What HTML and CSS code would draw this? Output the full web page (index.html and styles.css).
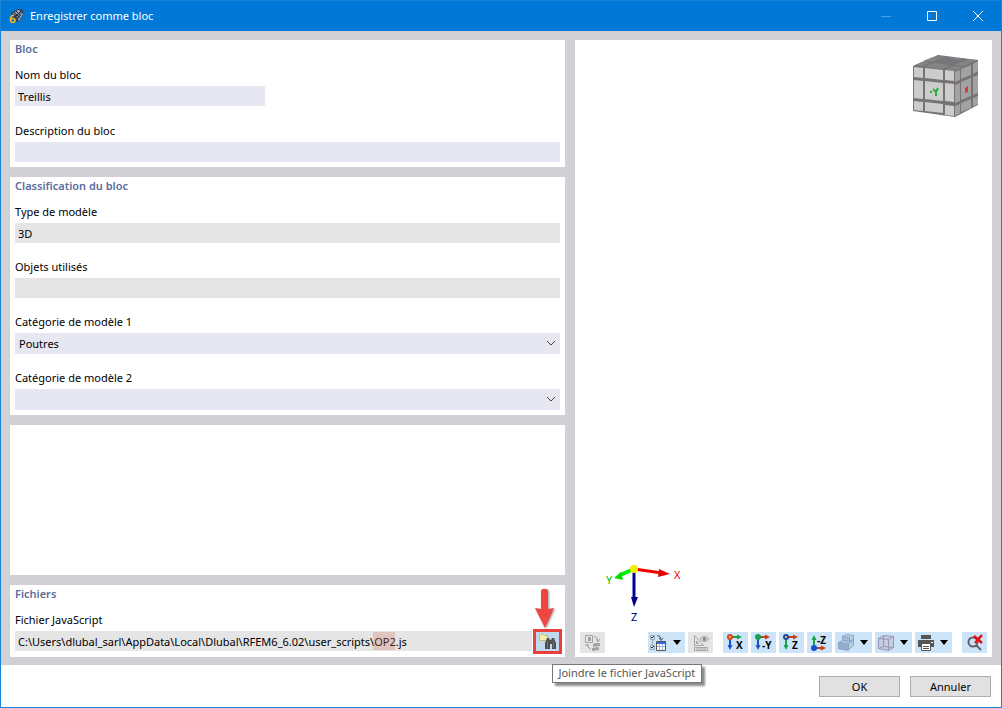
FILE: index.html
```html
<!DOCTYPE html>
<html lang="fr">
  <head>
    <meta charset="UTF-8" />
    <meta name="viewport" content="width=device-width, initial-scale=1.0" />
    <title>Enregistrer comme bloc</title>
    <link rel="stylesheet" href="styles.css">
  </head>
  <body>
    <div class="window">
      <header class="titlebar">
        <svg class="app-icon" width="16" height="16" viewBox="0 0 16 16">
          <path d="M2 5 8 1l5 0 2 4-4 8-4 1-5-5z" fill="#33455a" />
          <path d="M4 5l5-3 3 1-5 4zM9 11l4-6 1 1-4 7z" fill="#9fb0c2" />
          <path d="M7 8l5-4 1 1-4 5z" fill="#6d8197" />
          <path d="M5 4l6 6M7 3l5 5M6 9l6-6" stroke="#1b2a3c" fill="none" />
          <path d="M5 7.500C2.500 7 1.500 9 1.500 11.500s1 3 2.200 3S6 13.500 6 12.500s-1-2-2.300-2S1.500 11 1.500 12" fill="none" stroke="#f0bb28" stroke-width="1.600" />
        </svg>
        <h1>Enregistrer comme bloc</h1>
        <div class="window-controls">
          <button class="dim" aria-label="Réduire">
            <svg width="10" height="10"><path d="M0 5.500h10" /></svg>
          </button>
          <button aria-label="Agrandir">
            <svg width="10" height="10"><path d="M.5.500h9v9h-9z" /></svg>
          </button>
          <button aria-label="Fermer">
            <svg width="10" height="10"><path d="M0 0l10 10M10 0L0 10" /></svg>
          </button>
        </div>
      </header>

      <main class="content">
        <form class="form-column">
          <section class="panel panel-block">
            <h2>Bloc</h2>
            <div class="field">
              <label for="name">Nom du bloc</label>
              <input class="short" id="name" type="text" value="Treillis" />
            </div>
            <div class="field">
              <label for="description">Description du bloc</label>
              <input id="description" type="text" />
            </div>
          </section>

          <section class="panel">
            <h2>Classification du bloc</h2>
            <div class="field">
              <label for="type">Type de modèle</label>
              <input id="type" type="text" value="3D" readonly />
            </div>
            <div class="field">
              <label for="objects">Objets utilisés</label>
              <input id="objects" type="text" readonly />
            </div>
            <div class="field">
              <label for="category1">Catégorie de modèle 1</label>
              <div class="select">
                <select id="category1"><option>Poutres</option></select>
                <svg width="10" height="6"><path d="M1 1l4 4 4-4" /></svg>
              </div>
            </div>
            <div class="field">
              <label for="category2">Catégorie de modèle 2</label>
              <div class="select">
                <select id="category2"><option></option></select>
                <svg width="10" height="6"><path d="M1 1l4 4 4-4" /></svg>
              </div>
            </div>
          </section>

          <section class="panel"></section>

          <section class="panel">
            <h2>Fichiers</h2>
            <div class="field">
              <label for="script">Fichier JavaScript</label>
              <div class="file-row">
                <div class="file-path">
                  <input id="script" type="text" value="C:\Users\dlubal_sarl\AppData\Local\Dlubal\RFEM6_6.02\user_scripts\OP2.js" readonly />
                  <span class="highlight"></span>
                </div>
                <div class="browse">
                  <button class="tool" type="button" aria-label="Joindre le fichier JavaScript">
                    <svg width="19" height="17" viewBox="0 0 19 17">
                      <path d="M1.500 2.500l1-1h3l1 1h3v5h-8z" fill="#f6efaa" stroke="#cdbf62" />
                      <path d="M9 5h2l1 2h1l1-2h2l2 5v6h-4v-5h-2v5H7v-6z" fill="#505050" />
                      <path d="M9.500 8v7M15.500 8v7" stroke="#707070" />
                    </svg>
                  </button>
                  <svg class="arrow" width="22" height="42" viewBox="0 0 22 42">
                    <path d="M7 3q0-2 2-2h3q2 0 2 2v18l6-1-9 20L1 20l6 1z" fill="#ee4640" />
                  </svg>
                  <div class="tooltip" role="tooltip">Joindre le fichier JavaScript</div>
                </div>
              </div>
            </div>
          </section>
        </form>

        <section class="preview">
          <div class="viewport">
            <svg class="cube" width="68" height="64" viewBox="0 0 68 64">
              <path d="M1 12L26 1l40 5v45L43 63 1 57z" fill="#777373" />
              <path d="M3 11l7-3 8 1-7 3zM11 7l10-4 8 1-9 4zM23 3l4-1 8 1-5 1zM13 13l8-4 18 2-8 4zM22 8l9-4 16 2-8 4zM33 3l4 0 15 2-4 1zM34 15l8-3 9 1-8 4zM43 11l7-4 9 1-6 4zM52 7l4-2 8 1-4 2z" fill="#858585" />
              <path d="M22 8l9-4 16 2-8 4z" fill="#73777d" />
              <path d="M2 13l9 1v10l-9-1zM13 14l18 2v10l-18-2zM33 16l9 1v10l-9-1zM2 26l9 1v18l-9-1zM13 27l18 2v18l-18-2zM33 29l9 1v18l-9-1zM2 47l9 1v9l-9-1zM13 48l18 2v9l-18-2zM33 51l9 1v10l-9-1z" fill="#cccccc" />
              <path d="M43 18l5-2v10l-5 2zM49 15l10-4v10l-10 4zM61 10l5-3v10l-5 3zM43 31l5-2v18l-5 2zM49 28l10-4v18l-10 4zM61 23l5-2v18l-5 2zM43 52l5-2v9l-5 3zM49 49l10-4v9l-10 4zM61 44l5-2v8l-5 3z" fill="#a2a2a2" />
              <path d="M18 38h2M21 35l3 3 2-4M24 37v5" stroke="#2bac3c" stroke-width="2" fill="none" />
              <path d="M53 34l3-2v6l-3 1z" fill="#dc3a36" />
            </svg>
            <svg class="axes" width="86" height="66" viewBox="0 0 86 66">
              <path d="M34 9l28 4" stroke="#f20000" stroke-width="3" />
              <path d="M59 9l11 5-12 3z" fill="#e50000" />
              <path d="M34 9l-14 6" stroke="#00f000" stroke-width="4" />
              <path d="M21 12l-7 6 9 2z" fill="#00e000" />
              <path d="M34 9v30" stroke="#000096" stroke-width="3" />
              <path d="M31 37h7l-4 10z" fill="#000080" />
              <circle cx="34" cy="9" r="4" fill="#f2ee00" />
              <text x="74" y="19" fill="#f20000">X</text>
              <text x="6" y="24" fill="#00c000">Y</text>
              <text x="31" y="61" fill="#000080">Z</text>
            </svg>
          </div>

          <div class="toolbar">
            <button class="tool first" disabled aria-label="Image">
              <svg width="18" height="18" viewBox="0 0 18 18" fill="none" stroke="#a2a2a2">
                <path d="M1.500 1.500h7v7h-7z" />
                <path d="M4 3h3v4H4z" fill="#a2a2a2" stroke="none" />
                <path d="M10 2.500q4 0 4 5M12 5l2 3 2-3M3 10q0 4 4 5M1 12l2-2 2 2" />
                <path d="M9 10l2-1h5v3l-7 1zM8 14l7-1v3l-7 1z" fill="#a2a2a2" stroke="none" />
              </svg>
            </button>
            <button class="tool menu" aria-label="Options d'affichage">
              <svg width="18" height="18" viewBox="0 0 18 18" fill="none">
                <path d="M.5 1.500h4v4h-4zM.5 11.500h4v4h-4zM2.500 6v5" stroke="#9aa7b3" />
                <path d="M1 3l1 1 2-2M1 13l1 1 2-2" stroke="#333" />
                <path d="M7 1.500q4 0 4 4M9 4l2 2.500L13 4" stroke="#555" />
                <path d="M6.500 7.500h9v9h-9z" fill="#fff" stroke="#555" />
                <path d="M7 8h8v2H7z" fill="#3769ed" />
                <path d="M7 12.500h8M9.500 10v6M12.500 10v6" stroke="#9db1c8" />
              </svg>
              <span class="caret"></span>
            </button>
            <button class="tool" disabled aria-label="Mesures">
              <svg width="18" height="18" viewBox="0 0 18 18" fill="none" stroke="#a5a5a5">
                <path d="M2.500 1.500v10h9zM4.500 7v2.500h2z" />
                <path d="M2.500 13.500h13v3h-13zM5 14v2M7 14v2M9 14v2M11 14v2M13 14v2" />
                <path d="M8 5q4-5 9 0-5 5-9 0z" />
                <circle cx="12.500" cy="5" r="1.500" fill="#8d8d8d" stroke="#8d8d8d" />
              </svg>
            </button>

            <button class="tool group" aria-label="Vue X">
              <svg class="view-icon" width="19" height="18" viewBox="0 0 19 18">
                <path d="M4 3h8" stroke="#16a34a" />
                <path d="M11 0.500l5 2.500-5 2.500z" fill="#16a34a" />
                <path d="M4 3v9" stroke="#1650cf" />
                <path d="M1.500 11h5L4 16z" fill="#1650cf" />
                <circle cx="4" cy="3" r="2" fill="#ffe34d" stroke="#d8431a" />
                <text x="10" y="15">X</text>
              </svg>
            </button>
            <button class="tool" aria-label="Vue -Y">
              <svg class="view-icon" width="19" height="18" viewBox="0 0 19 18">
                <path d="M4 3h8" stroke="#cf3b15" />
                <path d="M11 0.500l5 2.500-5 2.500z" fill="#cf3b15" />
                <path d="M4 3v9" stroke="#1650cf" />
                <path d="M1.500 11h5L4 16z" fill="#1650cf" />
                <circle cx="4" cy="3" r="2" fill="#16a34a" stroke="#16a34a" />
                <text x="8" y="15">-Y</text>
              </svg>
            </button>
            <button class="tool" aria-label="Vue Z">
              <svg class="view-icon" width="19" height="18" viewBox="0 0 19 18">
                <path d="M4 3h8" stroke="#cf3b15" />
                <path d="M11 0.500l5 2.500-5 2.500z" fill="#cf3b15" />
                <path d="M4 3v9" stroke="#16a34a" />
                <path d="M1.500 11h5L4 16z" fill="#16a34a" />
                <circle cx="4" cy="3" r="2" fill="#ffe34d" stroke="#254799" />
                <text x="10" y="15">Z</text>
              </svg>
            </button>
            <button class="tool" aria-label="Vue -Z">
              <svg class="view-icon" width="19" height="18" viewBox="0 0 19 18">
                <path d="M4 14h8" stroke="#cf3b15" />
                <path d="M11 11.500l5 2.500-5 2.500z" fill="#cf3b15" />
                <path d="M4 14V6" stroke="#16a34a" />
                <path d="M1.500 6h5L4 1z" fill="#16a34a" />
                <circle cx="4" cy="14" r="2" fill="#1650cf" stroke="#1650cf" />
                <text x="7" y="10">-Z</text>
              </svg>
            </button>
            <button class="tool menu" aria-label="Affichage du modèle">
              <svg width="18" height="18" viewBox="0 0 18 18" stroke="#8ba6c4">
                <path d="M5.500 2.500l4-2 7 1v4l-4 2-7-1z" fill="#b9cee4" />
                <path d="M5.500 2.500l7 1v4l-7-1z" fill="#a3bbd6" />
                <path d="M1.500 8.500l4-2 7 1 4-2v6l-5 4-10-1z" fill="#b9cee4" />
                <path d="M1.500 8.500l10 1v7l-10-2z" fill="#94afcd" />
                <path d="M11.500 9.500l5-3" />
              </svg>
              <span class="caret"></span>
            </button>
            <button class="tool menu" aria-label="Affichage filaire">
              <svg width="18" height="18" viewBox="0 0 18 18" fill="#c5cde3" stroke="#9a94b2">
                <path d="M1.500 4.500l5-3 10 1v11l-5 3-10-2z" />
                <path d="M1.500 4.500l10 1v11M11.500 5.500l5-3M6.500 1.500v11l10 1M6.500 12.500l-5 2" fill="none" />
              </svg>
              <span class="caret"></span>
            </button>
            <button class="tool menu" aria-label="Imprimer">
              <svg width="18" height="18" viewBox="0 0 18 18" fill="#555">
                <path d="M4 1h10v4H4zM1 6h16v7H1z" />
                <path d="M4.500 9.500h9v7h-9z" fill="#fff" stroke="#555" />
                <path d="M6 12.500h6M6 14.500h6" stroke="#555" />
                <path d="M14 8h2v1h-2z" fill="#fff" />
              </svg>
              <span class="caret"></span>
            </button>
            <button class="tool group" aria-label="Réinitialiser le zoom">
              <svg width="18" height="18" viewBox="0 0 18 18" fill="none">
                <circle cx="7" cy="8" r="4.500" stroke="#5c6268" stroke-width="2" />
                <path d="M10 11l5 5" stroke="#5c6268" stroke-width="2" />
                <path d="M8 2l8 7M16 1L9 9" stroke="#e80c17" stroke-width="2.500" />
              </svg>
            </button>
          </div>
        </section>
      </main>

      <footer class="footer">
        <button>OK</button>
        <button>Annuler</button>
      </footer>
    </div>
  </body>
</html>
```

FILE: styles.css
```css
* {
  margin: 0;
  padding: 0;
  box-sizing: border-box;
}

body,
button,
input,
select {
  font-family: "Noto Sans", "Open Sans", sans-serif;
  font-size: 11px;
  color: #000;
}

button,
input,
select {
  border: none;
  border-radius: 0;
  outline: none;
}

svg {
  display: block;
}

.window {
  display: flex;
  flex-direction: column;
  min-height: 100vh;
  border: 1px solid #1883d7;
  background-color: #fff;
}

/* Title bar */
.titlebar {
  display: flex;
  align-items: center;
  height: 30px;
  padding-left: 8px;
  background-color: #0078d7;
}

.titlebar h1 {
  margin-left: 5px;
  padding-bottom: 2px;
  color: #fff;
  font-size: 11px;
  font-weight: normal;
}

.window-controls {
  display: flex;
  margin-left: auto;
}

.window-controls button {
  display: flex;
  align-items: center;
  justify-content: center;
  width: 46px;
  height: 30px;
  background: none;
}

.window-controls svg {
  fill: none;
  stroke: #fff;
}

.window-controls .dim svg {
  stroke: #4c9fe2;
}

/* Main area */
.content {
  flex: 1;
  display: grid;
  grid-template-columns: 4fr 3fr;
  gap: 10px;
  padding: 9px 9px 8px;
  background-color: #d1d0d5;
}

.form-column {
  display: grid;
  grid-template-rows: auto auto 1fr auto;
  gap: 10px;
}

.panel {
  display: flex;
  flex-direction: column;
  gap: 16px;
  padding: 0 5px 5px;
  background-color: #fff;
}

.panel-block {
  gap: 17px;
}

.panel h2 {
  height: 18px;
  margin-bottom: -7px;
  color: #5b6d9b;
  font-size: 11px;
  font-weight: 600;
  line-height: 18px;
}

.panel-block h2 {
  margin-bottom: -8px;
}

.field label {
  display: block;
  margin-bottom: 3px;
  line-height: 16px;
}

.field input {
  display: block;
  width: 100%;
  height: 20px;
  padding: 1px 3px 0;
  background-color: #e7e7f2;
}

.field input.short {
  width: 250px;
}

.field input[readonly] {
  background-color: #e5e5e5;
}

.select {
  position: relative;
}

.select select {
  display: block;
  width: 100%;
  height: 21px;
  padding: 0 4px;
  background-color: #e7e7f2;
  appearance: none;
}

.select svg {
  position: absolute;
  top: 7px;
  right: 4px;
  fill: none;
  stroke: #444;
  pointer-events: none;
}

.file-row {
  display: flex;
  gap: 3px;
}

.file-path {
  position: relative;
  flex: 1;
}

.highlight {
  position: absolute;
  top: 1px;
  left: 358px;
  width: 22px;
  height: 18px;
  background-color: rgba(215, 120, 100, 0.3);
}

.browse {
  position: relative;
}

.browse .tool {
  background-color: #c0d9ef;
  outline: 3px solid #e8413d;
  outline-offset: -1px;
}

.arrow {
  position: absolute;
  right: 4px;
  bottom: 22px;
  filter: drop-shadow(1px 1px 1px rgba(0, 0, 0, 0.4));
}

.tooltip {
  position: absolute;
  top: 33px;
  left: 17px;
  padding: 0 6px 1px 5px;
  border: 1px solid #767676;
  background-color: #fff;
  box-shadow: 3px 3px 2px rgba(0, 0, 0, 0.45);
  color: #575757;
  line-height: 16px;
  white-space: nowrap;
}

/* 3D preview */
.preview {
  display: flex;
  flex-direction: column;
  background-color: #fff;
}

.viewport {
  flex: 1;
  display: flex;
  flex-direction: column;
  justify-content: space-between;
  padding: 14px 12px 6px 25px;
}

.cube {
  align-self: flex-end;
}

.axes {
  font-size: 11px;
}

.toolbar {
  display: flex;
  gap: 3px;
  padding: 0 5px 4px;
}

.tool {
  display: flex;
  align-items: center;
  justify-content: center;
  width: 25px;
  height: 21px;
  background-color: #cce4f7;
}

.tool:disabled {
  background-color: #e5e5e5;
}

.tool.first {
  margin-right: auto;
}

.tool.group {
  margin-left: 7px;
}

.tool.menu {
  justify-content: space-between;
  width: 37px;
  padding: 0 4px 0 2px;
}

.caret {
  border: 4px solid transparent;
  border-top: 5px solid #000;
  border-bottom: none;
}

.view-icon {
  stroke-width: 2;
}

.view-icon circle {
  stroke-width: 2;
}

.view-icon text {
  font-family: "Open Sans", sans-serif;
  font-size: 10px;
  font-weight: bold;
}

/* Dialog buttons */
.footer {
  display: flex;
  justify-content: flex-end;
  gap: 10px;
  padding: 11px 10px 10px;
}

.footer button {
  width: 81px;
  height: 21px;
  border: 1px solid #adadad;
  background-color: #e1e1e1;
}
```
